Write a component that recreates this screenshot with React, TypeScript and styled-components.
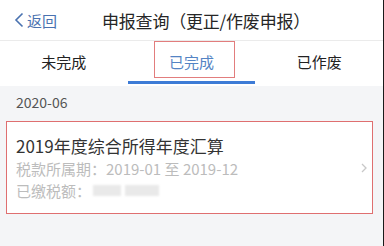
import React from "react";
import styled, { createGlobalStyle } from "styled-components";

const Global = createGlobalStyle`
  html, body { margin: 0; padding: 0; }
  body { font-family: "Noto Sans CJK SC", "Noto Sans", sans-serif; }
  * { box-sizing: border-box; }
`;

const Screen = styled.div`
  width: 384px;
  height: 246px;
  overflow: hidden;
  background: #f4f5f7;
  border-right: 1px solid #1a1a1a;
  display: flex;
  flex-direction: column;
`;

const Header = styled.header`
  height: 41px;
  flex: none;
  background: #fff;
  border-bottom: 1px solid #ebebeb;
  display: flex;
  align-items: center;
  padding-left: 14px;
`;

const Back = styled.div`
  display: flex;
  align-items: center;
  gap: 3px;
  color: #4a72b0;
  font-size: 15px;
  width: 88px;
`;

const Title = styled.div`
  font-size: 17px;
  color: #262626;
  letter-spacing: -0.2px;
`;

const Tabs = styled.nav`
  height: 45px;
  flex: none;
  background: #fff;
  display: grid;
  grid-template-columns: repeat(3, 1fr);
`;

const Tab = styled.div<{ $active?: boolean }>`
  position: relative;
  display: flex;
  align-items: center;
  justify-content: center;
  padding-bottom: 4px;
  font-size: 15px;
  color: ${(p) => (p.$active ? "#5484c4" : "#222")};
  &::after {
    content: "";
    display: ${(p) => (p.$active ? "block" : "none")};
    position: absolute;
    left: 0;
    right: 0;
    bottom: 2px;
    height: 3px;
    background: #3d7bd6;
  }
`;

const Mark = styled.span`
  position: absolute;
  left: 26px;
  top: 0;
  width: 81px;
  height: 37px;
  border: 1.5px solid #e27d7d;
`;

const DateRow = styled.div`
  height: 35px;
  flex: none;
  display: flex;
  align-items: center;
  padding: 0 0 3px 16px;
  font-size: 14px;
  color: #555;
`;

const Card = styled.div`
  margin: 0 10px 0 6px;
  height: 93px;
  background: #fff;
  border: 1.5px solid #df6f70;
  display: flex;
  align-items: center;
  padding: 0 5px 0 9px;
`;

const CardBody = styled.div`
  flex: 1;
  display: flex;
  flex-direction: column;
`;

const CardTitle = styled.div`
  font-size: 17px;
  line-height: 24px;
  color: #333;
`;

const Meta = styled.div`
  font-size: 15px;
  line-height: 22px;
  color: #bcbcbc;
  display: flex;
  align-items: center;
`;

const Blur = styled.span<{ $w: number; $ml: number }>`
  display: inline-block;
  width: ${(p) => p.$w}px;
  height: 11px;
  margin-left: ${(p) => p.$ml}px;
  background: #e9e9e9;
  filter: blur(1px);
`;

const Chevron = styled.div`
  color: #c8c8c8;
  display: flex;
`;

export default function App() {
  return (
    <>
      <Global />
      <Screen>
        <Header>
          <Back>
            <svg width="10" height="16" viewBox="0 0 10 16">
              <path d="M8.5 1.5 L2 8 L8.5 14.5" fill="none" stroke="#4a72b0" strokeWidth="1.6" />
            </svg>
            <span>返回</span>
          </Back>
          <Title>申报查询（更正/作废申报）</Title>
        </Header>
        <Tabs>
          <Tab>未完成</Tab>
          <Tab $active>
            已完成
            <Mark />
          </Tab>
          <Tab>已作废</Tab>
        </Tabs>
        <DateRow>2020-06</DateRow>
        <Card>
          <CardBody>
            <CardTitle>2019年度综合所得年度汇算</CardTitle>
            <Meta>税款所属期：2019-01 至 2019-12</Meta>
            <Meta>
              已缴税额：
              <Blur $w={28} $ml={2} />
              <Blur $w={34} $ml={4} />
            </Meta>
          </CardBody>
          <Chevron>
            <svg width="6" height="10" viewBox="0 0 6 10">
              <path d="M1 1 L5 5 L1 9" fill="none" stroke="#c8c8c8" strokeWidth="1.3" />
            </svg>
          </Chevron>
        </Card>
      </Screen>
    </>
  );
}
